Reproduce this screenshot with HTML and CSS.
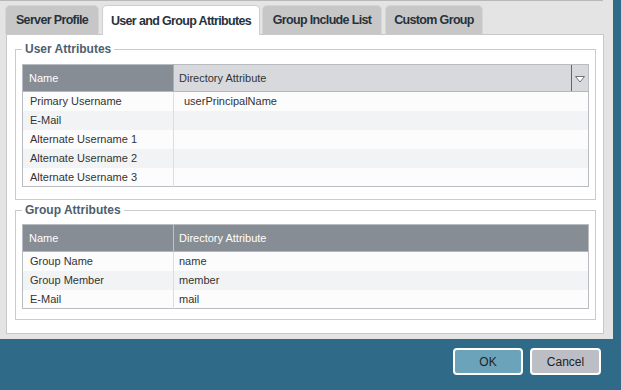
FILE: index.html
```html
<!DOCTYPE html>
<html lang="en">
<head>
  <meta charset="UTF-8"/>
  <title>Authentication Profile</title>
  <link rel="stylesheet" href="styles.css">
</head>
<body>
  <div class="dialog">
    <div class="top-rule"></div>

    <!-- Tab strip -->
    <div class="tabs">
      <div class="tab tab-server">Server Profile</div>
      <div class="tab tab-active">User and Group Attributes</div>
      <div class="tab tab-include">Group Include List</div>
      <div class="tab tab-custom">Custom Group</div>
    </div>

    <div class="panel">
      <fieldset class="group group-first">
        <legend>User Attributes</legend>
        <table class="grid">
          <thead>
            <tr>
              <th class="col-name">Name</th>
              <th class="col-attr col-menu">
                Directory Attribute
                <span class="menu-trigger">
                  <svg width="10" height="7" viewBox="0 0 10 7"><path d="M0.5,0.5 L9.5,0.5 L5,6 Z" fill="#fff" stroke="#6b737c"/></svg>
                </span>
              </th>
            </tr>
          </thead>
          <tbody>
            <tr><td>Primary Username</td><td class="value">userPrincipalName</td></tr>
            <tr><td>E-Mail</td><td class="value"></td></tr>
            <tr><td>Alternate Username 1</td><td class="value"></td></tr>
            <tr><td>Alternate Username 2</td><td class="value"></td></tr>
            <tr><td>Alternate Username 3</td><td class="value"></td></tr>
          </tbody>
        </table>
      </fieldset>

      <fieldset class="group group-second">
        <legend>Group Attributes</legend>
        <table class="grid grid-dark">
          <thead>
            <tr>
              <th class="col-name">Name</th>
              <th class="col-attr">Directory Attribute</th>
            </tr>
          </thead>
          <tbody>
            <tr><td>Group Name</td><td>name</td></tr>
            <tr><td>Group Member</td><td>member</td></tr>
            <tr><td>E-Mail</td><td>mail</td></tr>
          </tbody>
        </table>
      </fieldset>
    </div>
  </div>

  <div class="button-bar">
    <button class="btn btn-ok">OK</button>
    <button class="btn btn-cancel">Cancel</button>
  </div>
</body>
</html>
```

FILE: styles.css
```css
*, *::before, *::after {
  box-sizing: border-box;
}
body {
  margin: 0;
  padding: 0;
  background: #2f6b88;
  font-family: 'Liberation Sans', Arial, sans-serif;
  font-size: 11px;
  color: #333;
}

.dialog {
  width: 613px;
  height: 339px;
  background: #e4e4e4;
}
.top-rule {
  width: 603px;
  height: 1px;
  background: #b8b8b8;
}

/* Tabs */
.tabs {
  display: flex;
  gap: 3px;
  height: 29px;
  margin-top: 4px;
  padding-left: 5px;
  align-items: flex-start;
}
.tab {
  height: 29px;
  display: flex;
  align-items: center;
  justify-content: center;
  background: #c7c7c7;
  border: 1px solid #d6d6d6;
  border-bottom: none;
  border-radius: 5px 5px 0 0;
  font-family: 'Liberation Sans', Arial, sans-serif;
  font-weight: bold;
  font-size: 12.5px;
  letter-spacing: -0.65px;
  color: #28323c;
}
.tab-server { width: 94px; }
.tab-include { width: 120px; margin-left: -1px; }
.tab-custom { width: 98px; }
.tab-active {
  width: 158px;
  height: 30px;
  margin-bottom: -1px;
  background: #fff;
  border-color: #cfcfcf;
  z-index: 2;
}

.panel {
  width: 598px;
  height: 300px;
  margin-left: 6px;
  background: #fff;
  border: 1px solid #c9c9c9;
  padding-top: 7px;
}

/* Fieldsets */
.group {
  margin: 0 7px 0 8px;
  padding: 8px 6px 10px;
  border: 1px solid #cbcbcb;
}
.group-first {
  padding-bottom: 12px;
}
.group-second {
  margin-top: 3px;
  padding-top: 7px;
}
.group legend {
  padding: 0 3px;
  font-size: 12px;
  line-height: 14px;
  font-weight: bold;
  color: #4d5f70;
}

/* Grids */
.grid {
  width: 100%;
  border-collapse: collapse;
  border: 1px solid #b9bcc1;
  table-layout: fixed;
}
.grid th {
  height: 27px;
  padding: 0 0 0 5px;
  text-align: left;
  font-weight: normal;
  border-bottom: 1px solid #b4b8bd;
}
.grid .col-name {
  width: 151px;
  padding-left: 6px;
  background: #878d94;
  color: #fff;
  border-right: 1px solid #a9adb2;
}
.grid .col-attr {
  background: #d8d9dc;
  color: #333;
}
.grid-dark .col-attr {
  background: #878d94;
  color: #fff;
}
.grid-dark .col-name {
  border-right: 1px solid #bfc3c7;
}
.col-menu {
  position: relative;
}
.menu-trigger {
  position: absolute;
  top: 0;
  right: 0;
  width: 17px;
  height: 26px;
  border-left: 1px solid #5c6570;
  display: flex;
  align-items: center;
  justify-content: center;
  padding-top: 2px;
}

.grid td {
  height: 19px;
  padding: 0 0 0 7px;
  white-space: nowrap;
  color: #333;
}
.grid td:first-child {
  border-right: 1px solid #dcdde0;
}
.grid td.value {
  padding-left: 10px;
}
.grid-dark td:last-child {
  padding-left: 5px;
}
.grid tbody tr:nth-child(odd) {
  background: #fcfcfc;
}
.grid tbody tr:nth-child(even) {
  background: #f2f3f4;
}

/* Bottom buttons */
.button-bar {
  display: flex;
  justify-content: flex-end;
  gap: 7px;
  padding: 9px 20px 0 0;
}
.btn {
  width: 71px;
  height: 27px;
  border: 2px solid #fff;
  border-radius: 4px;
  font-family: 'Liberation Sans', Arial, sans-serif;
  font-size: 12px;
  color: #222;
  cursor: pointer;
}
.btn-ok {
  width: 70px;
  background: #6ba3bb;
}
.btn-cancel {
  background: #bcbec6;
}
```
